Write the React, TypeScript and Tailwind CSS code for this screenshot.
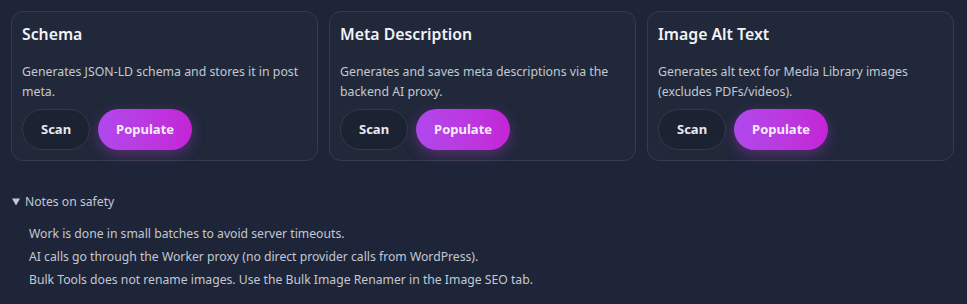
const tools = [
  {
    title: 'Schema',
    desc: 'Generates JSON-LD schema and stores it in post meta.',
  },
  {
    title: 'Meta Description',
    desc: 'Generates and saves meta descriptions via the backend AI proxy.',
  },
  {
    title: 'Image Alt Text',
    desc: 'Generates alt text for Media Library images (excludes PDFs/videos).',
  },
];

const notes = [
  'Work is done in small batches to avoid server timeouts.',
  'AI calls go through the Worker proxy (no direct provider calls from WordPress).',
  'Bulk Tools does not rename images. Use the Bulk Image Renamer in the Image SEO tab.',
];

export default function App() {
  return (
    <div
      className="min-h-screen bg-[#1e2538] py-[11px] pl-[11px] pr-[13px] text-[#e5e7eb]"
      style={{ fontFamily: '"Noto Sans", "Open Sans", sans-serif' }}
    >
      <div className="grid grid-cols-3 gap-[11px]">
        {tools.map(t => (
          <div
            key={t.title}
            className="rounded-[12px] border border-[#343c4e] bg-[#20283a] px-[10px] pt-[10px] pb-[10px]"
          >
            <h3 className="text-[15.8px] leading-[24px] font-semibold text-[#f1f3f7]">{t.title}</h3>
            <p className="mt-[16px] text-[12.3px] leading-[20px] text-[#c3c8d2]">{t.desc}</p>
            <div className="mt-[7px] flex items-center gap-[8px]">
              <button className="h-[41px] rounded-full border border-[#323a4b] bg-[#1b2231] px-[18px] text-[13px] font-bold text-[#e8eaee]">
                Scan
              </button>
              <button className="h-[41px] rounded-full bg-gradient-to-r from-[#b048ec] to-[#c424d6] px-[18px] text-[13px] font-bold text-[#f5ecfb] shadow-[0_4px_14px_rgba(192,60,230,0.35)]">
                Populate
              </button>
            </div>
          </div>
        ))}
      </div>

      <details open className="mt-[31px] text-[12.2px] text-[#c3c8d2]">
        <summary className="cursor-pointer leading-[20px] pl-[1px]">Notes on safety</summary>
        <ul className="mt-[10px] pl-[18px]">
          {notes.map(n => (
            <li key={n} className="h-[23px] leading-[23px]">
              {n}
            </li>
          ))}
        </ul>
      </details>
    </div>
  );
}
